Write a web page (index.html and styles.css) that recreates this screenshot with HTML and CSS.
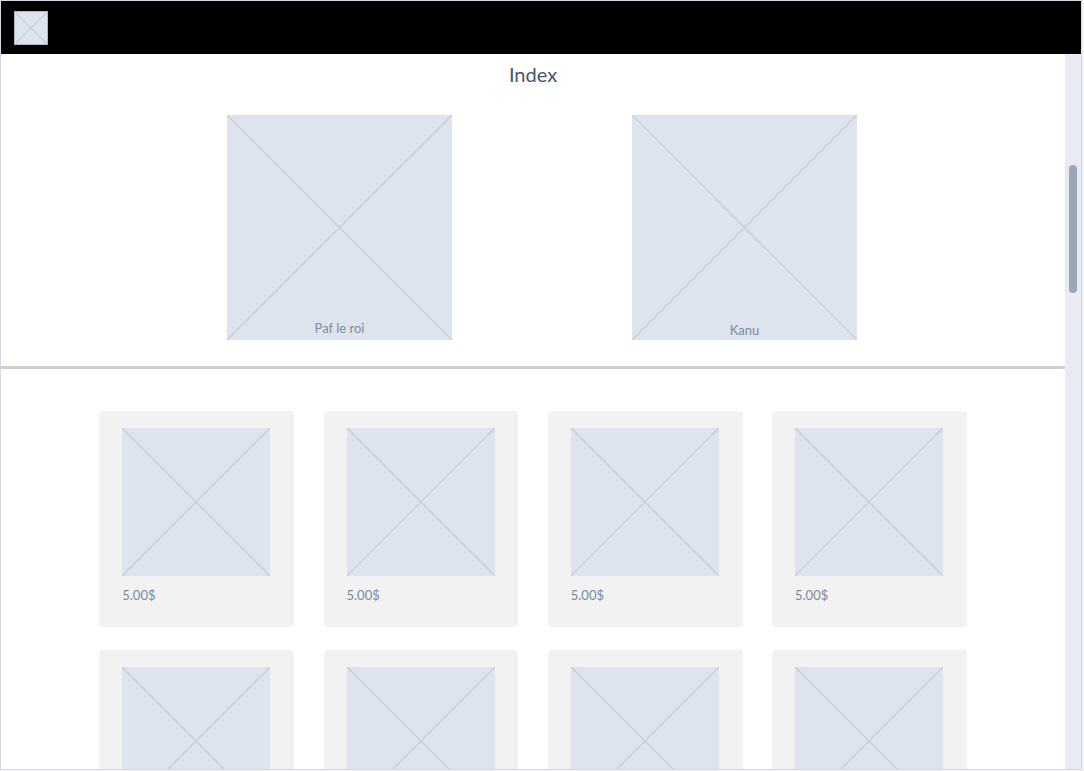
FILE: index.html
```html
<!DOCTYPE html>
<html lang="en">
<head>
    <meta charset="UTF-8">
    <meta name="viewport" content="width=device-width, initial-scale=1.0">
    <title>Index</title>
    <link rel="stylesheet" href="styles.css">
</head>
<body>
    <div class="frame">
        <header class="topbar">
            <div class="logo">
                <svg viewBox="0 0 10 10" preserveAspectRatio="none"><line x1="0" y1="0" x2="10" y2="10"/><line x1="10" y1="0" x2="0" y2="10"/></svg>
            </div>
        </header>

        <div class="main">
            <div class="content">
                <h1 class="title">Index</h1>

                <div class="heroes">
                    <div class="hero">
                        <svg viewBox="0 0 10 10" preserveAspectRatio="none"><line x1="0" y1="0" x2="10" y2="10"/><line x1="10" y1="0" x2="0" y2="10"/></svg>
                        <span class="hero-caption">Paf le roi</span>
                    </div>
                    <div class="hero">
                        <svg viewBox="0 0 10 10" preserveAspectRatio="none"><line x1="0" y1="0" x2="10" y2="10"/><line x1="10" y1="0" x2="0" y2="10"/></svg>
                        <span class="hero-caption low">Kanu</span>
                    </div>
                </div>

                <hr class="divider">

                <div class="products" id="products"></div>
            </div>

            <div class="scrollbar">
                <div class="thumb"></div>
            </div>
        </div>
    </div>

    <script>
        // Build the product cards
        const products = document.getElementById('products');
        const cross = '<svg viewBox="0 0 10 10" preserveAspectRatio="none"><line x1="0" y1="0" x2="10" y2="10"/><line x1="10" y1="0" x2="0" y2="10"/></svg>';

        for (let i = 0; i < 8; i++) {
            const card = document.createElement('div');
            card.className = 'card';
            card.innerHTML = `
                <div class="card-image">${cross}</div>
                <div class="price">5.00$</div>
            `;
            products.appendChild(card);
        }
    </script>
</body>
</html>
```

FILE: styles.css
```css
body {
    margin: 0;
    padding: 0;
    background-color: #f1f3f7;
    font-family: Lato, "Noto Sans", sans-serif;
}

.frame {
    width: 1082px;
    height: 770px;
    border: 1px solid #d3d8e1;
    box-sizing: border-box;
    background-color: white;
    display: flex;
    flex-direction: column;
    overflow: hidden;
}

.topbar {
    height: 53px;
    flex-shrink: 0;
    background-color: #000;
    padding: 10px 0 0 13px;
    box-sizing: border-box;
}

.logo {
    width: 34px;
    height: 34px;
    box-sizing: border-box;
    border: 1px solid #aeb6c2;
    background-color: #dee4ed;
}

svg {
    display: block;
    width: 100%;
    height: 100%;
}

svg line {
    stroke: #c6ceda;
    stroke-width: 1.3px;
    vector-effect: non-scaling-stroke;
}

.main {
    flex: 1;
    display: flex;
    min-height: 0;
}

.content {
    width: 1064px;
    overflow: hidden;
}

.title {
    margin: 0;
    padding-top: 8px;
    text-align: center;
    font-size: 20px;
    line-height: 24px;
    font-weight: normal;
    color: #4a5568;
}

.heroes {
    display: flex;
    justify-content: center;
    gap: 180px;
    padding-left: 18px;
    margin-top: 29px;
}

.hero {
    position: relative;
    width: 225px;
    height: 225px;
    background-color: #dee4ed;
}

.hero-caption {
    position: absolute;
    left: 0;
    right: 0;
    bottom: 4px;
    text-align: center;
    font-size: 13px;
    line-height: 16px;
    color: #7f8a9e;
}

.hero-caption.low {
    bottom: 2px;
}

.divider {
    margin: 26px 0 0 0;
    height: 3px;
    border: none;
    background-color: #d0d0d0;
}

.products {
    display: grid;
    grid-template-columns: repeat(4, 194.75px);
    column-gap: 29.5px;
    row-gap: 23px;
    justify-content: center;
    margin-top: 42px;
}

.card {
    height: 216px;
    box-sizing: border-box;
    padding: 17px 23px 0 23px;
    background-color: #f2f2f2;
    border-radius: 4px;
}

.card-image {
    width: 148px;
    height: 148px;
    background-color: #dee4ed;
}

.price {
    margin-top: 11px;
    font-size: 13px;
    line-height: 16px;
    color: #7d889b;
}

.scrollbar {
    width: 16px;
    background-color: #e8ebf4;
}

.thumb {
    width: 8px;
    height: 128px;
    margin: 111px 0 0 4px;
    border-radius: 4px;
    background-color: #9ba6b6;
}
```
